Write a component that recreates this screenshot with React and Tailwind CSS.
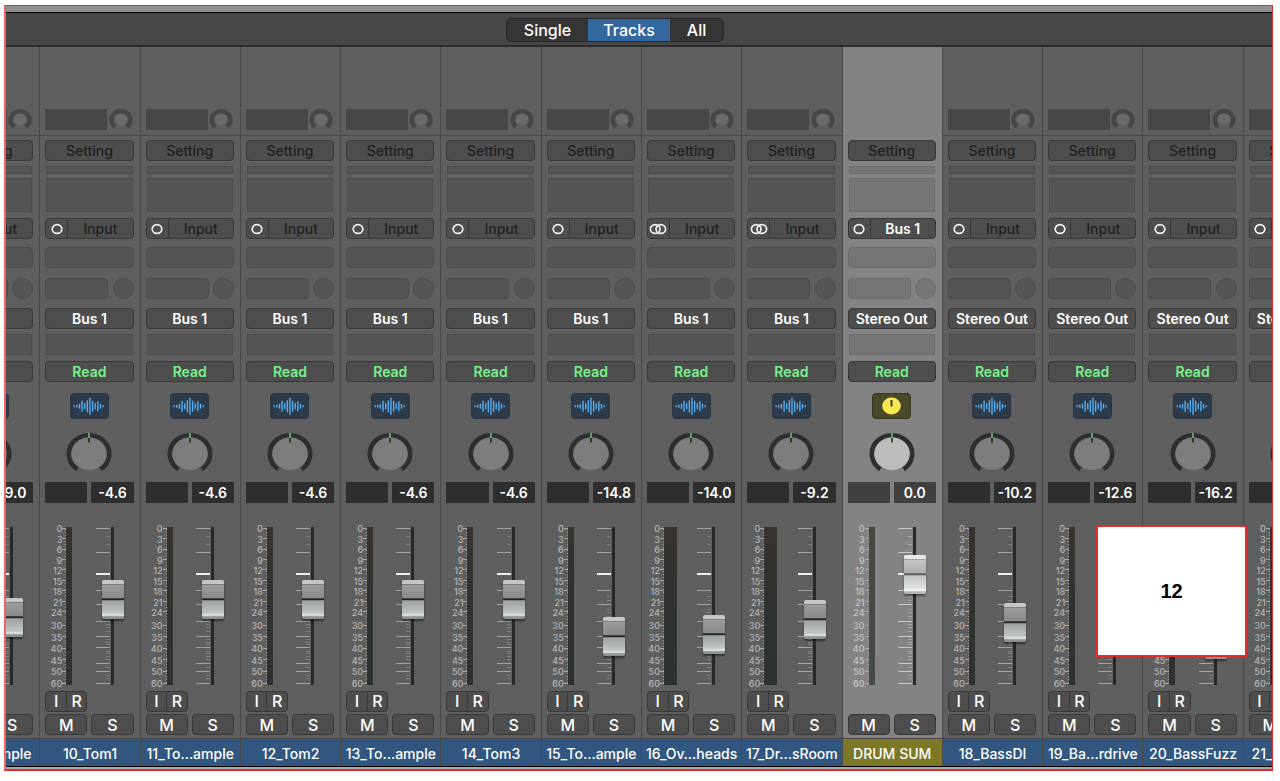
const tracks = [
  { name: "9_To…ample", output: "Bus 1", level: "-9.0", fader: 67 },
  { name: "10_Tom1", output: "Bus 1", level: "-4.6", fader: 85 },
  { name: "11_To…ample", output: "Bus 1", level: "-4.6", fader: 85 },
  { name: "12_Tom2", output: "Bus 1", level: "-4.6", fader: 85 },
  { name: "13_To…ample", output: "Bus 1", level: "-4.6", fader: 85 },
  { name: "14_Tom3", output: "Bus 1", level: "-4.6", fader: 85 },
  { name: "15_To…ample", output: "Bus 1", level: "-14.8", fader: 48 },
  { name: "16_Ov…heads", output: "Bus 1", level: "-14.0", fader: 50, stereo: true },
  { name: "17_Dr…sRoom", output: "Bus 1", level: "-9.2", fader: 65, stereo: true },
  { name: "DRUM SUM", output: "Stereo Out", level: "0.0", fader: 110, selected: true },
  { name: "18_BassDI", output: "Stereo Out", level: "-10.2", fader: 62 },
  { name: "19_Ba…rdrive", output: "Stereo Out", level: "-12.6", fader: 56 },
  { name: "20_BassFuzz", output: "Stereo Out", level: "-16.2", fader: 45 },
  { name: "21_LeadGtr2", output: "Stereo Out", level: "-8.0", fader: 50 },
];

const upperScale = [0, 3, 6, 9, 12, 15, 18, 21, 24];
const lowerScale = [30, 35, 40, 45, 50, 60];
const scaleMarks = [2, 12, 23, 33, 43, 54, 64, 75, 85, 99, 110, 122, 133, 145, 157];
const longTicks = [2, 26, 64, 78, 95, 110, 121, 137, 145, 157];
const shortTicks = [10, 18, 70, 74, 83, 86, 90, 98, 101, 105, 113, 116, 118, 125, 127, 130, 133, 141, 149, 152];
const waveBars = [2, 3, 5, 11, 6, 12, 17, 11, 6, 10, 5, 2];

function Slot({ className, selected }) {
  return (
    <div
      className={`border ${selected ? "border-[#6c6c6c] bg-[#757575]" : "border-[#4c4c4c] bg-[#555555]"} ${className}`}
    />
  );
}

const buttonBase =
  "flex h-[21px] items-center justify-center overflow-hidden whitespace-nowrap rounded border border-[#393939] bg-[#4e4e4e]";

function GainRing() {
  return (
    <svg className="h-[22px] w-6" viewBox="0 0 24 22" aria-hidden="true">
      <path d="M6.2 18.6 A9.4 8.6 0 1 1 17.8 18.6" fill="none" stroke="#474747" strokeWidth="4.6" />
      <ellipse cx="12" cy="11.4" rx="6.3" ry="5.9" fill="#6b6b6b" />
    </svg>
  );
}

function WaveIcon() {
  return (
    <svg className="h-6 w-[37px]" viewBox="0 0 37 24" aria-hidden="true">
      {waveBars.map((h, i) => (
        <line
          key={i}
          x1={3.2 + i * 2.63}
          x2={3.2 + i * 2.63}
          y1={12.3 - h / 2}
          y2={12.3 + h / 2}
          stroke="#58aef2"
          strokeWidth="1.4"
        />
      ))}
    </svg>
  );
}

function BusIcon() {
  return (
    <svg className="h-6 w-[37px]" viewBox="0 0 37 24" aria-hidden="true">
      <ellipse cx="18.5" cy="12" rx="9.3" ry="8.5" fill="#f9ea4f" />
      <line x1="18.5" x2="18.5" y1="6" y2="12.5" stroke="#3a3817" strokeWidth="2" />
    </svg>
  );
}

function PanKnob({ selected }) {
  return (
    <svg className="h-10 w-[46px]" viewBox="0 0 46 40" aria-hidden="true">
      <path d="M11.4 37.2 A20.2 18.7 0 1 1 34.6 37.2" fill="none" stroke="#2f2f2f" strokeWidth="4.6" />
      <ellipse cx="23" cy="21.7" rx="17.6" ry="16.2" fill={selected ? "#bdbdbd" : "#7d7d7d"} />
      <line x1="23" x2="23" y1="1" y2="6" stroke="#5ccf73" strokeWidth="1.5" />
      <line x1="23" x2="23" y1="6" y2="10.5" stroke="#222222" strokeWidth="1.5" />
    </svg>
  );
}

function FormatIcon({ stereo }) {
  return (
    <svg className="h-[14px] w-5" viewBox="0 0 20 14" fill="none" stroke="#f2f2f2" strokeWidth="1.7" aria-hidden="true">
      {stereo ? (
        <>
          <ellipse cx="7.2" cy="7" rx="4.8" ry="4.4" />
          <ellipse cx="12.8" cy="7" rx="4.8" ry="4.4" />
        </>
      ) : (
        <ellipse cx="10" cy="7" rx="4.8" ry="4.4" />
      )}
    </svg>
  );
}

function MeterScale({ stereo, selected }) {
  const color = selected ? "text-[#c4c4c4]" : "text-[#b4b4b4]";
  const width = stereo ? "w-[13px]" : "w-[17px]";
  return (
    <div className={`flex flex-col gap-[3px] text-right text-[9px] leading-[10px] font-medium ${width} ${color}`}>
      <div className="flex h-[94px] flex-col justify-between">
        {upperScale.map((n) => (
          <span key={n}>{n}</span>
        ))}
      </div>
      <div className="flex h-[68px] flex-col justify-between">
        {lowerScale.map((n) => (
          <span key={n}>{n}</span>
        ))}
      </div>
    </div>
  );
}

function Meter({ stereo, selected }) {
  const minor = Array.from({ length: 52 }, (_, i) => 2 + i * 3);
  return (
    <div className="flex pt-[3px]">
      <svg className="h-[158px] w-1" viewBox="0 0 4 158" aria-hidden="true">
        {minor.map((y) => (
          <rect key={y} x="3" y={y} width="1" height="1" fill="#9b9b9b" />
        ))}
        {scaleMarks.map((y) => (
          <rect key={y} x="0" y={y - 1} width="4" height="1" fill="#a8a8a8" />
        ))}
      </svg>
      <div
        className={`h-[158px] bg-linear-to-b ${selected ? "from-[#4b473f] to-[#474a48]" : "from-[#38332c] via-[#2f3230] to-[#2d3230]"} ${stereo ? "w-[13px]" : "w-[6px]"}`}
      />
    </div>
  );
}

function Fader({ name, value, selected }) {
  const cap = selected
    ? "[&::-webkit-slider-thumb]:bg-[linear-gradient(#e8e8e8_0_10%,#999_11%,#c4c4c4_14%,#adadad_46%,#5c5c5c_48%_51%,#bfc3c3_53%,#dfe3e3_85%,#f2f2f2_88%_92%,#b5b8b8_94%)]"
    : "[&::-webkit-slider-thumb]:bg-[linear-gradient(#c6c6c6_0_10%,#777_11%,#9b9b9b_14%,#8a8a8a_46%,#262626_48%_51%,#9da1a1_53%,#bfc4c5_85%,#d6dada_88%_92%,#8e9292_94%)]";
  return (
    <div className="relative h-[158px] w-7">
      <svg className="h-[158px] w-7" viewBox="0 0 28 158" aria-hidden="true">
        {longTicks.map((y) => (
          <rect key={y} x="0" y={y - 1} width="14" height="1" fill={selected ? "#c9c9c9" : "#a3a3a3"} />
        ))}
        {shortTicks.map((y) => (
          <rect key={y} x="10" y={y - 1} width="4" height="1" fill={selected ? "#a6a6a6" : "#808080"} />
        ))}
        <rect x="0" y="46" width="14" height="2" fill="#eeeeee" />
        <rect x="15" y="0" width="3" height="158" fill="#292929" />
      </svg>
      <input
        type="range"
        min="0"
        max="155"
        defaultValue={value}
        aria-label={`${name} volume`}
        className={`absolute -top-[17px] left-[6px] m-0 h-[194px] w-[22px] cursor-pointer appearance-none bg-transparent [direction:rtl] [writing-mode:vertical-lr] [&::-webkit-slider-thumb]:h-[39px] [&::-webkit-slider-thumb]:w-[22px] [&::-webkit-slider-thumb]:appearance-none [&::-webkit-slider-thumb]:rounded-xs [&::-webkit-slider-thumb]:shadow-[0_2px_2px_rgba(0,0,0,0.45)] ${cap}`}
      />
    </div>
  );
}

function Strip({ track }) {
  const { name, output, level, fader, stereo, selected } = track;
  return (
    <section
      aria-label={name}
      className={`flex min-w-0 flex-col border-l border-[#484848] ${selected ? "bg-[#838383]" : "bg-[#5f5f5f]"}`}
    >
      <div
        className={`flex h-[89px] items-end border-b pr-[7px] pb-[5px] pl-[5px] ${selected ? "border-[#838383]" : "border-[#4a4a4a]"}`}
      >
        {!selected && (
          <div className="flex w-full items-end justify-between">
            <div className="h-[21px] w-[62px] bg-[#474747]" />
            <GainRing />
          </div>
        )}
      </div>

      <div className="flex flex-col pt-1 pr-[6px] pl-[5px] text-sm font-medium">
        <button className={`${buttonBase} text-[#222222]`}>Setting</button>
        <Slot selected={selected} className="mx-px mt-[5px] h-2" />
        <Slot selected={selected} className="mx-px mt-1 h-[34px]" />
        <div className={`${buttonBase} mt-[6px]`}>
          <button aria-label="Format" className="flex h-full w-[22px] items-center justify-center border-r border-[#393939]">
            <FormatIcon stereo={stereo} />
          </button>
          <button className={`h-full flex-1 leading-[19px] ${selected ? "font-semibold text-white" : "text-[#222222]"}`}>
            {selected ? "Bus 1" : "Input"}
          </button>
        </div>
        <Slot selected={selected} className="mt-2 h-[21px] rounded-sm" />
        <div className="mt-[10px] flex justify-between">
          <Slot selected={selected} className="h-[21px] w-[63px] rounded-sm" />
          <Slot selected={selected} className="h-[21px] w-[21px] rounded-full" />
        </div>
        <button className={`${buttonBase} mt-[9px] font-semibold text-white`}>{output}</button>
        <Slot selected={selected} className="mx-px mt-[5px] h-[21px]" />
        <button className={`${buttonBase} mt-[6px] font-semibold text-[#78f08c]`}>Read</button>

        <button
          aria-label="Channel icon"
          className={`mt-[11px] flex h-[26px] w-[39px] items-center justify-center self-center rounded border ${selected ? "border-[#36351f] bg-[#4b492a]" : "border-[#2b3540] bg-[#2d3b4a]"}`}
        >
          {selected ? <BusIcon /> : <WaveIcon />}
        </button>
        <button aria-label="Pan" className="mt-[13px] self-center">
          <PanKnob selected={selected} />
        </button>

        <div className="mt-[10px] grid grid-cols-2 gap-1 font-semibold text-white">
          <output aria-label="Peak" className={`h-[21px] ${selected ? "bg-[#404040]" : "bg-[#2e2e2e]"}`} />
          <output
            aria-label="Level"
            className={`h-[21px] text-center leading-[21px] ${selected ? "bg-[#404040]" : "bg-[#2e2e2e]"}`}
          >
            {level}
          </output>
        </div>

        <div className="mt-[21px] flex h-[165px]">
          <MeterScale stereo={stereo} selected={selected} />
          <Meter stereo={stereo} selected={selected} />
          <div className="ml-auto pt-[3px] pr-[10px]">
            <Fader name={name} value={fader} selected={selected} />
          </div>
        </div>

        <div className="mt-[2px] grid h-[21px] grid-cols-2 gap-1 text-base text-white">
          {!selected && (
            <div className={buttonBase}>
              <button aria-label="Input monitoring" className="h-full flex-1 border-r border-[#393939] leading-[19px]">
                I
              </button>
              <button aria-label="Record enable" className="h-full flex-1 leading-[19px]">
                R
              </button>
            </div>
          )}
        </div>
        <div className="mt-[2px] grid grid-cols-2 gap-1 text-base text-white">
          <button aria-label="Mute" className={buttonBase}>
            M
          </button>
          <button aria-label="Solo" className={buttonBase}>
            S
          </button>
        </div>
      </div>

      <div
        className={`mt-[3px] flex h-7 items-center justify-center overflow-hidden border-t border-[#484848] pt-[2px] text-sm font-medium whitespace-nowrap text-white ${selected ? "bg-[#7b7925]" : "bg-[#315780]"}`}
      >
        {name}
      </div>
    </section>
  );
}

const views = ["Single", "Tracks", "All"];

export default function App() {
  return (
    <main className="bg-white py-[5px] pr-[7px] pl-1 font-['Inter',sans-serif]">
      <div className="relative overflow-hidden border border-b-2 border-l-2 border-[#e62a2a] border-l-[#f26464]">
        <div className="h-[6px] bg-[#909090]" />
        <header className="flex h-[35px] items-center justify-center border-t border-b-2 border-t-black border-b-[#2c2c2c] bg-[#474747] pt-[2px] pr-12">
          <nav
            aria-label="Mixer view"
            className="flex h-6 overflow-hidden rounded-[5px] border border-[#282828] bg-[#353535] text-base leading-[22px] font-medium text-white"
          >
            {views.map((view) => (
              <button
                key={view}
                aria-pressed={view === "Tracks"}
                className={view === "Tracks" ? "w-[82px] bg-[#35679f]" : view === "Single" ? "w-[81px]" : "w-[53px]"}
              >
                {view}
              </button>
            ))}
          </nav>
        </header>

        <div className="-mr-[71px] -ml-[67px] grid grid-cols-14">
          {tracks.map((track) => (
            <Strip key={track.name} track={track} />
          ))}
        </div>
        <div className="h-[3px] border-t border-black bg-[#a9a9a9]" />

        <aside className="absolute right-[25px] bottom-[112px] flex h-[132px] w-[151px] items-center justify-center border-2 border-[#e62a2a] bg-white font-['Liberation_Sans',sans-serif] text-xl font-bold text-black">
          12
        </aside>
      </div>
    </main>
  );
}
